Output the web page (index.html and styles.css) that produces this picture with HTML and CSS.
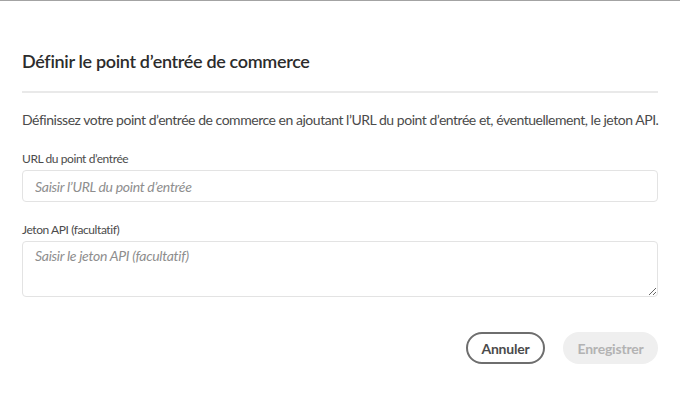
FILE: index.html
```html
<!DOCTYPE html>
<html lang="fr">
<head>
<meta charset="utf-8">
<link rel="stylesheet" href="styles.css">
</head>
<body>
<div class="dialog">
  <h2 class="title">Définir le point d’entrée de commerce</h2>
  <hr class="divider">
  <p class="desc">Définissez votre point d’entrée de commerce en ajoutant l’URL du point d’entrée et, éventuellement, le jeton API.</p>
  <div class="field">
    <label class="label" for="url">URL du point d’entrée</label>
    <input id="url" class="input" type="text" placeholder="Saisir l’URL du point d’entrée">
  </div>
  <div class="field">
    <label class="label" for="token">Jeton API (facultatif)</label>
    <textarea id="token" class="textarea" placeholder="Saisir le jeton API (facultatif)"></textarea>
  </div>
  <div class="actions">
    <button class="btn btn-secondary" type="button">Annuler</button>
    <button class="btn btn-primary" type="button" disabled>Enregistrer</button>
  </div>
</div>
</body>
</html>
```
FILE: styles.css
```css
html, body {
  margin: 0;
  padding: 0;
  background: #fff;
}
body {
  border-top: 1px solid #a3a3a3;
  font-family: Lato, "Open Sans", sans-serif;
  color: #4b4b4b;
}
.dialog {
  padding: 44px 22px 0 22px;
  display: flex;
  flex-direction: column;
}
.title {
  margin: 0;
  font-size: 18px;
  font-weight: 600;
  color: #2c2c2c;
  line-height: 32px;
  letter-spacing: -0.33px;
}
.divider {
  margin: 14px 0 0 0;
  border: none;
  height: 2px;
  background: #e9e9e9;
}
.desc {
  margin: 17px 0 0 0;
  font-size: 14px;
  line-height: 20px;
  color: #4b4b4b;
  letter-spacing: -0.47px;
  white-space: nowrap;
}
.field {
  display: flex;
  flex-direction: column;
  margin-top: 21px;
}
.field + .field {
  margin-top: 20px;
}
.label {
  font-size: 12px;
  line-height: 16px;
  color: #4b4b4b;
  margin-bottom: 3px;
  letter-spacing: -0.42px;
}
.input, .textarea {
  box-sizing: border-box;
  width: 100%;
  border: 1px solid #e3e3e3;
  border-radius: 4px;
  font-family: Lato, "Open Sans", sans-serif;
  font-size: 14px;
  font-style: italic;
  color: #4b4b4b;
  padding: 0 12px;
  outline: none;
  margin: 0;
  letter-spacing: -0.3px;
}
.input {
  height: 32px;
}
.textarea {
  height: 56px;
  padding-top: 5px;
  display: block;
}
.input::placeholder, .textarea::placeholder {
  color: #8e8e8e;
  font-style: italic;
}
.actions {
  display: flex;
  justify-content: flex-end;
  gap: 18px;
  margin-top: 35px;
}
.btn {
  height: 32px;
  border-radius: 16px;
  font-family: Lato, "Open Sans", sans-serif;
  font-size: 14px;
  font-weight: 700;
  padding: 0 10px;
  box-sizing: border-box;
  letter-spacing: -0.2px;
}
.btn-secondary {
  background: #fff;
  border: 2px solid #6e6e6e;
  color: #4b4b4b;
  width: 79px;
}
.btn-primary {
  background: #efefef;
  border: 2px solid #efefef;
  color: #b3b3b3;
  width: 95px;
}
```
